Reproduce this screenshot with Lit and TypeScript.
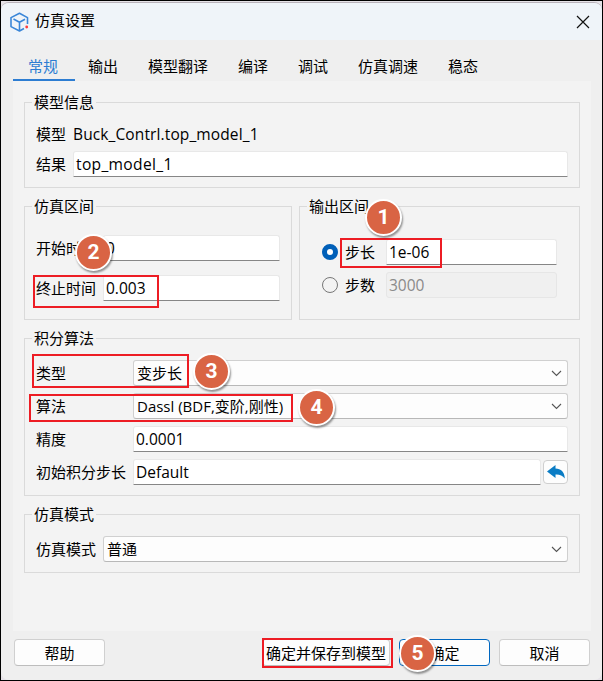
import { LitElement, html, css } from "lit";
import { customElement, property } from "lit/decorators.js";
import { classMap } from "lit/directives/class-map.js";
import { styleMap } from "lit/directives/style-map.js";

const chevron = html`<svg width="11" height="7" viewBox="0 0 11 7" fill="none" stroke="#555" stroke-width="1.1"><path d="M1 1l4.5 4.5L10 1" /></svg>`;

@customElement("group-box")
class GroupBox extends LitElement {
  @property() label = "";
  static styles = css`
    :host { display: block; box-sizing: border-box; border: 1px solid #dadada; }
    .legend { display: table; height: 20px; line-height: 20px; margin: -11px 0 0 7px; padding: 0 2px; background: #f3f3f3; }
  `;
  render() {
    return html`<div class="legend">${this.label}</div><slot></slot>`;
  }
}

interface Mark { n: number; cx: number; cy: number; x: number; y: number; w: number; h: number; }

const marks: Mark[] = [
  { n: 1, cx: 383, cy: 217, x: 340, y: 238, w: 102, h: 30 },
  { n: 2, cx: 93, cy: 252, x: 33, y: 275, w: 126, h: 33 },
  { n: 3, cx: 211, cy: 371, x: 32, y: 354, w: 157, h: 34 },
  { n: 4, cx: 316, cy: 407, x: 29, y: 394, w: 264, h: 28 },
  { n: 5, cx: 417, cy: 653, x: 262, y: 638, w: 131, h: 30 },
];

@customElement("app-root")
class AppRoot extends LitElement {
  static styles = css`
    * { box-sizing: border-box; }
    :host { display: block; box-sizing: border-box; position: relative; width: 603px; height: 681px; background: #000; padding: 1px; overflow: hidden;
      font: 15px/20px "Open Sans", "Noto Sans CJK SC", sans-serif; color: #000; white-space: nowrap; }
    .frame { height: 679px; background: #e6e3e8; padding-top: 1px; }
    .window { height: 678px; background: #efefef; border-top: 1px solid #b9b3bb; border-radius: 8px; display: flex; flex-direction: column; overflow: hidden; }
    .title { height: 37px; display: flex; align-items: center; padding: 0 12px 0 8px; background: #eff4f9; }
    .title span { flex: 1; margin-left: 6px; margin-top: -3px; }
    .tabs { display: flex; height: 41px; padding: 0 12px; align-items: flex-end; }
    .tab { height: 29px; line-height: 29px; padding: 0 15px; }
    .tab.on { color: #2d7dd2; border-bottom: 2px solid #2d7dd2; width: 62px; margin-right: -2px; }
    .panel { height: 550px; margin: 0 11px 0 12px; background: #f3f3f3; padding: 21px 11px 0; display: flex; flex-direction: column; }
    .pair { display: flex; gap: 7px; margin: 18px 0; }
    .row { display: flex; align-items: center; height: 26px; padding: 0 11px; }
    .field { height: 26px; line-height: 25px; background: #fff; border: 1px solid #e8e8e8; border-bottom-color: #868686; border-radius: 3px 3px 0 0; padding-left: 2px; flex: 1; font-size: 15.5px; }
    .disabled { background: #f0f0f0; color: #8a8a8a; border-color: #e6e6e6; border-radius: 3px; }
    .combo { height: 26px; background: #fdfdfd; border: 1px solid #d0d0d0; border-bottom-color: #b8b8b8; border-radius: 3px; display: flex; align-items: center; justify-content: space-between; padding: 0 5px 0 3px; flex: 1; }
    .name { font-size: 15.5px; letter-spacing: 0.12px; }
    .result { font-size: 15.6px; letter-spacing: 0.32px; line-height: 24px; }
    .l1 { width: 37px; } .l2 { width: 67px; } .l4 { width: 97px; }
    .info { height: 86px; } .info .row + .row { margin-top: 4px; } .info .first { margin-top: 9px; }
    .half { height: 114px; }
    .sim { width: 268px; } .out { flex: 1; }
    .sim .first { margin-top: 19px; } .sim .row + .row { margin-top: 14px; }
    .out .first { margin-top: 23px; } .out .row + .row { margin-top: 7px; }
    .out .row { padding: 0 22px; }
    .radio { width: 16px; height: 16px; border-radius: 50%; border: 1px solid #777; margin-right: 7px; }
    .radio.on { border: 5px solid #005fb8; background: #fff; }
    .out .l { width: 41px; }
    .algo { height: 158px; } .algo .first { margin-top: 12px; } .algo .row + .row { margin-top: 7px; }
    .undo { width: 25px; height: 24px; border: 1px solid #cfcfcf; border-radius: 4px; background: #fdfdfd; margin-left: 2px; display: flex; align-items: center; justify-content: center; }
    .mode { height: 59px; margin-top: 18px; } .mode .first { margin-top: 12px; }
    .footer { display: flex; padding: 8px 12px 0 13px; }
    .btn { width: 91px; height: 27px; border: 1px solid #d0d0d0; border-bottom-color: #bdbdbd; border-radius: 4px; background: #fdfdfd; text-align: center; line-height: 26px; }
    .save { width: 128px; margin: 0 9px 0 auto; }
    .ok { border-color: #0067c0; margin-right: 9px; }
    .box { position: absolute; border: 2px solid #ed1c24; }
    .badge { position: absolute; width: 37px; height: 37px; border-radius: 50%; background: #d96444; border: 2px solid #fff; box-shadow: 1px 2px 2px rgba(0,0,0,.4); color: #fff; font: bold 21px/33px Roboto, sans-serif; text-align: center; }
  `;

  render() {
    return html`
      <div class="frame"><div class="window">
        <div class="title">
          <svg width="20" height="20" viewBox="0 0 20 20" fill="none" stroke="#3a86d8" stroke-width="1.6" stroke-linejoin="round">
            <path d="M18.5 12V5.6L10.5 1.2 2 5.6v9L10.5 19l4.5-2.5" /><path d="M4.5 7l6 3.2 5.5-3M10.5 10.2V19" /><circle cx="17.7" cy="15" r="1.4" fill="#ff3b3b" stroke="none" />
          </svg>
          <span>仿真设置</span>
          <svg width="14" height="14" viewBox="0 0 14 14" stroke="#111" stroke-width="1.2"><path d="M1 1l12 12M13 1L1 13" /></svg>
        </div>
        <div class="tabs">${["常规", "输出", "模型翻译", "编译", "调试", "仿真调速", "稳态"].map(
          (t, i) => html`<div class=${classMap({ tab: true, on: i === 0 })}>${t}</div>`)}</div>
        <div class="panel">
          <group-box class="info" label="模型信息">
            <div class="row first"><span class="l1">模型</span><span class="name">Buck_Contrl.top_model_1</span></div>
            <div class="row"><span class="l1">结果</span><div class="field result">top_model_1</div></div>
          </group-box>
          <div class="pair">
            <group-box class="half sim" label="仿真区间">
              <div class="row first"><span class="l2">开始时间</span><div class="field">0</div></div>
              <div class="row"><span class="l2">终止时间</span><div class="field">0.003</div></div>
            </group-box>
            <group-box class="half out" label="输出区间">
              <div class="row first"><i class="radio on"></i><span class="l">步长</span><div class="field">1e-06</div></div>
              <div class="row"><i class="radio"></i><span class="l">步数</span><div class="field disabled">3000</div></div>
            </group-box>
          </div>
          <group-box class="algo" label="积分算法">
            <div class="row first"><span class="l4">类型</span><div class="combo">变步长${chevron}</div></div>
            <div class="row"><span class="l4">算法</span><div class="combo">Dassl (BDF,变阶,刚性)${chevron}</div></div>
            <div class="row"><span class="l4">精度</span><div class="field">0.0001</div></div>
            <div class="row"><span class="l4">初始积分步长</span><div class="field">Default</div><div class="undo">
              <svg width="18" height="14" viewBox="0 0 18 14" fill="#0a7cc4"><path d="M0 6.5L8.5 0v3.6C14 3.6 17.5 7 17.8 13.5 15.5 10.2 12.5 9.3 8.5 9.5V13z" /></svg></div></div>
          </group-box>
          <group-box class="mode" label="仿真模式">
            <div class="row first"><span class="l2">仿真模式</span><div class="combo">普通${chevron}</div></div>
          </group-box>
        </div>
        <div class="footer">
          <div class="btn">帮助</div><div class="btn save">确定并保存到模型</div><div class="btn ok">确定</div><div class="btn">取消</div>
        </div>
      </div></div>
      ${marks.map((m) => html`
        <div class="box" style=${styleMap({ left: m.x + "px", top: m.y + "px", width: m.w + "px", height: m.h + "px" })}></div>
        <div class="badge" style=${styleMap({ left: m.cx - 18 + "px", top: m.cy - 18 + "px" })}>${m.n}</div>`)}
    `;
  }
}
